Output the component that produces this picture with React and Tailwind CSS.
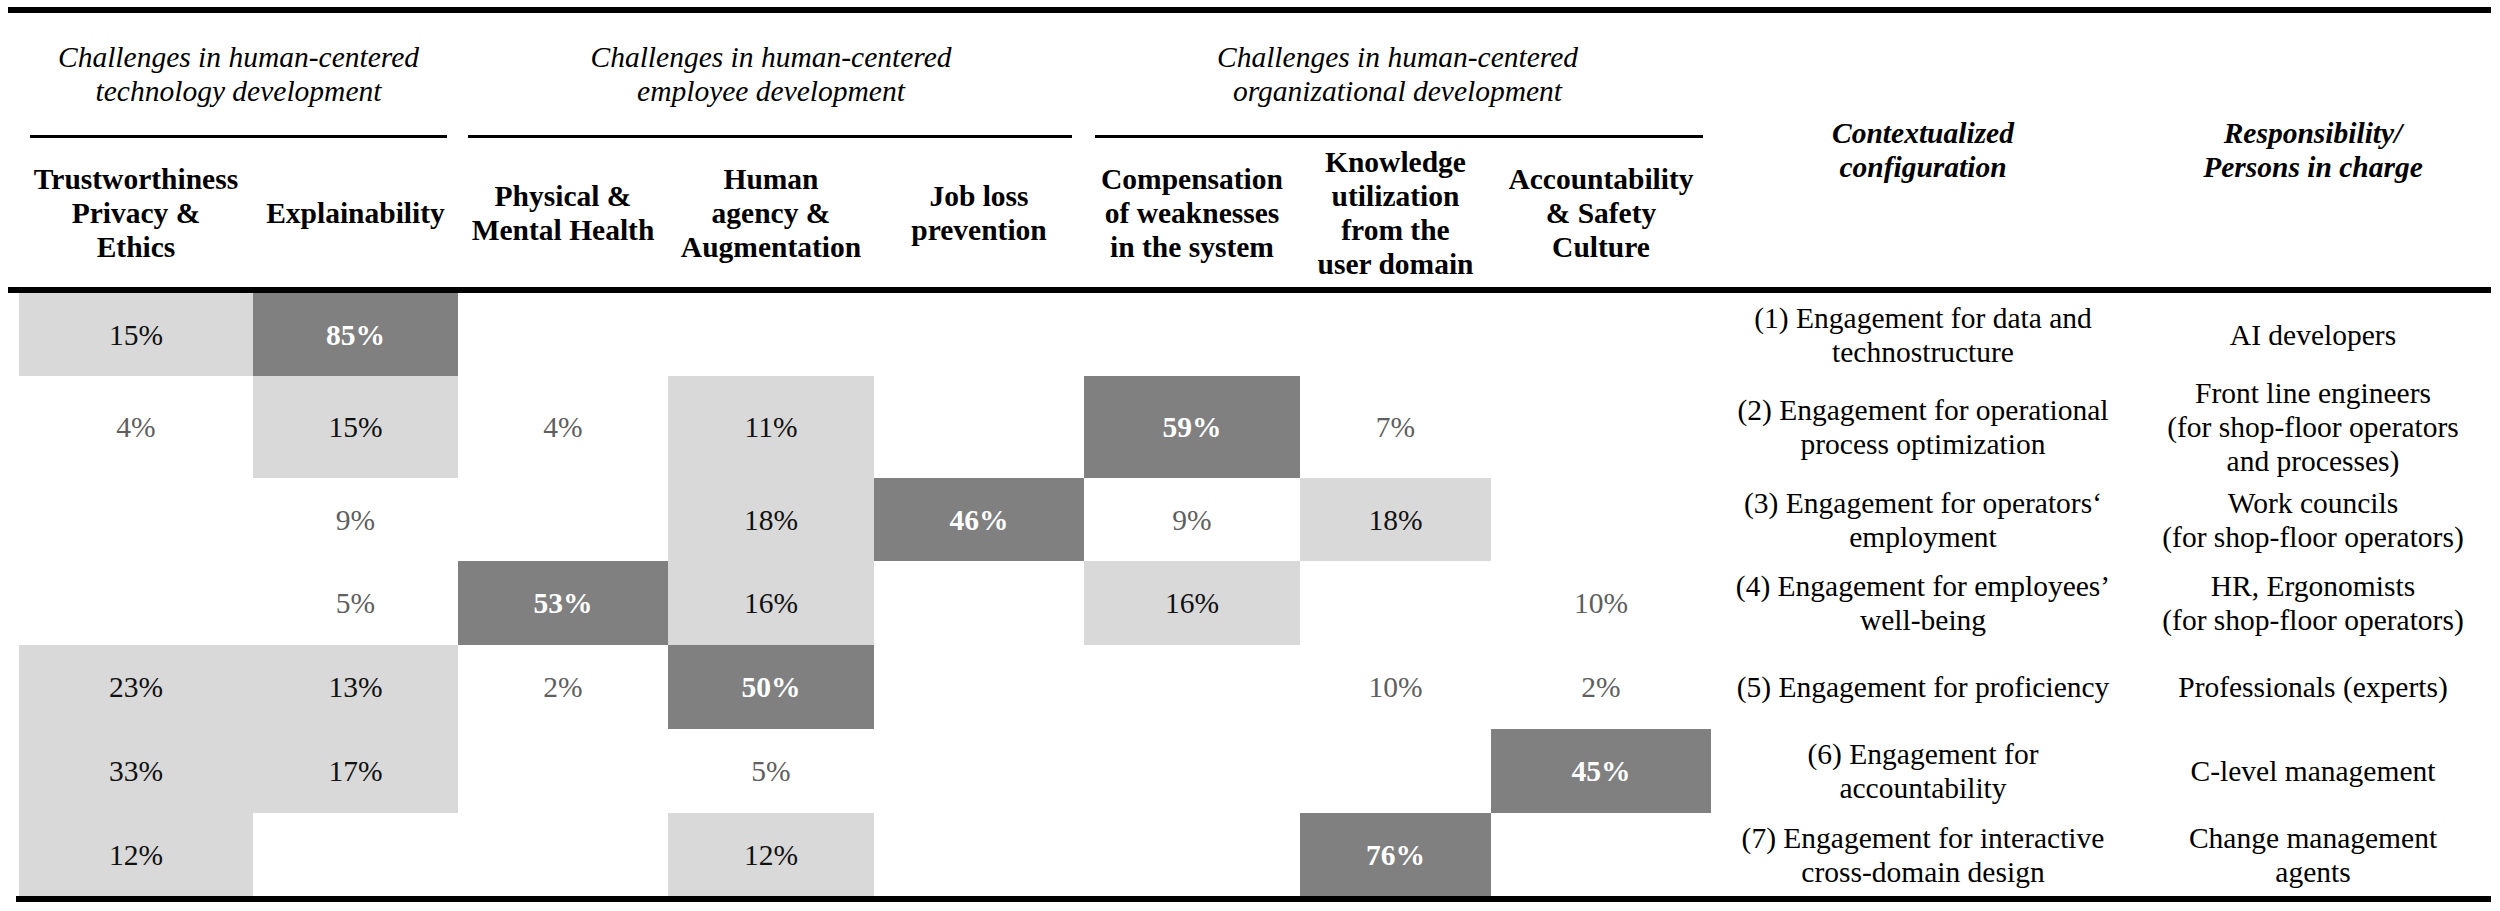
import React from "react";

const L = "L";
const D = "D";
const W = "W";

const rows = [
  {
    h: "h-[83px]",
    cells: [["15%", L], ["85%", D], null, null, null, null, null, null],
    ctx: ["(1) Engagement for data and", "technostructure"],
    resp: ["AI developers"],
  },
  {
    h: "h-[102px]",
    cells: [["4%", W], ["15%", L], ["4%", W], ["11%", L], null, ["59%", D], ["7%", W], null],
    ctx: ["(2) Engagement for operational", "process optimization"],
    resp: ["Front line engineers", "(for shop-floor operators", "and processes)"],
  },
  {
    h: "h-[83px]",
    cells: [null, ["9%", W], null, ["18%", L], ["46%", D], ["9%", W], ["18%", L], null],
    ctx: ["(3) Engagement for operators\u2018", "employment"],
    resp: ["Work councils", "(for shop-floor operators)"],
  },
  {
    h: "h-[84px]",
    cells: [null, ["5%", W], ["53%", D], ["16%", L], null, ["16%", L], null, ["10%", W]],
    ctx: ["(4) Engagement for employees\u2019", "well-being"],
    resp: ["HR, Ergonomists", "(for shop-floor operators)"],
  },
  {
    h: "h-[84px]",
    cells: [["23%", L], ["13%", L], ["2%", W], ["50%", D], null, null, ["10%", W], ["2%", W]],
    ctx: ["(5) Engagement for proficiency"],
    resp: ["Professionals (experts)"],
  },
  {
    h: "h-[84px]",
    cells: [["33%", L], ["17%", L], null, ["5%", W], null, null, null, ["45%", D]],
    ctx: ["(6) Engagement for", "accountability"],
    resp: ["C-level management"],
  },
  {
    h: "h-[83px]",
    cells: [["12%", L], null, null, ["12%", L], null, null, ["76%", D], null],
    ctx: ["(7) Engagement for interactive", "cross-domain design"],
    resp: ["Change management", "agents"],
  },
];

const cellClass = {
  L: "bg-[#d9d9d9] text-[#111111]",
  D: "bg-[#808080] text-white font-bold",
  W: "text-[#5f5f5f]",
};

const colStarts = [
  "col-start-2",
  "col-start-3",
  "col-start-4",
  "col-start-5",
  "col-start-6",
  "col-start-7",
  "col-start-8",
  "col-start-9",
];

const colHeaders = [
  ["Trustworthiness", "Privacy &", "Ethics"],
  ["Explainability"],
  ["Physical &", "Mental Health"],
  ["Human", "agency &", "Augmentation"],
  ["Job loss", "prevention"],
  ["Compensation", "of weaknesses", "in the system"],
  ["Knowledge", "utilization", "from the", "user domain"],
  ["Accountability", "& Safety", "Culture"],
];

const gridCols =
  "grid grid-cols-[11px_234px_205px_210px_206px_210px_216px_191px_220px_424px_356px]";

function Lines({ lines }) {
  return (
    <div className="text-center whitespace-nowrap">
      {lines.map((l, i) => (
        <div key={i}>{l}</div>
      ))}
    </div>
  );
}

function GroupHeader({ start, lines, ml, mr }) {
  return (
    <div className={`${start} col-span-3 row-start-1 flex flex-col`}>
      <div className="h-[122px] flex items-center justify-center italic">
        <Lines lines={lines} />
      </div>
      <div className={`h-[3px] bg-black ${ml} ${mr}`} />
    </div>
  );
}

export default function App() {
  return (
    <div className="min-h-screen bg-white text-black font-['Liberation_Serif','Times_New_Roman',serif] text-[29.5px] leading-[34px]">
      <div className="pt-[7px] pl-[8px] w-[2491px]">
        <div className="h-[6px] bg-black" />

        <div className={`${gridCols} grid-rows-[125px_149px]`}>
          <div className="col-start-2 col-span-2 row-start-1 flex flex-col">
            <div className="h-[122px] flex items-center justify-center italic">
              <Lines lines={["Challenges in human-centered", "technology development"]} />
            </div>
            <div className="h-[3px] bg-black ml-[11px] mr-[11px]" />
          </div>
          <GroupHeader
            start="col-start-4"
            lines={["Challenges in human-centered", "employee development"]}
            ml="ml-[10px]"
            mr="mr-[12px]"
          />
          <GroupHeader
            start="col-start-7"
            lines={["Challenges in human-centered", "organizational development"]}
            ml="ml-[11px]"
            mr="mr-[8px]"
          />

          {colHeaders.map((lines, i) => (
            <div
              key={i}
              className={`${colStarts[i]} row-start-2 flex items-center justify-center font-bold`}
            >
              <Lines lines={lines} />
            </div>
          ))}

          <div className="col-start-10 row-start-1 row-span-2 flex items-center justify-center italic font-bold">
            <Lines lines={["Contextualized", "configuration"]} />
          </div>
          <div className="col-start-11 row-start-1 row-span-2 flex items-center justify-center italic font-bold">
            <Lines lines={["Responsibility/", "Persons in charge"]} />
          </div>
        </div>

        <div className="h-[6px] bg-black" />

        {rows.map((r, ri) => (
          <div key={ri} className={`${gridCols} ${r.h}`}>
            <div />
            {r.cells.map((c, ci) => (
              <div
                key={ci}
                className={`flex items-center justify-center ${c ? cellClass[c[1]] : ""}`}
              >
                {c ? c[0] : ""}
              </div>
            ))}
            <div className="flex items-center justify-center">
              <Lines lines={r.ctx} />
            </div>
            <div className="flex items-center justify-center">
              <Lines lines={r.resp} />
            </div>
          </div>
        ))}

        <div className="h-[6px] bg-black ml-[8px]" />
      </div>
    </div>
  );
}
